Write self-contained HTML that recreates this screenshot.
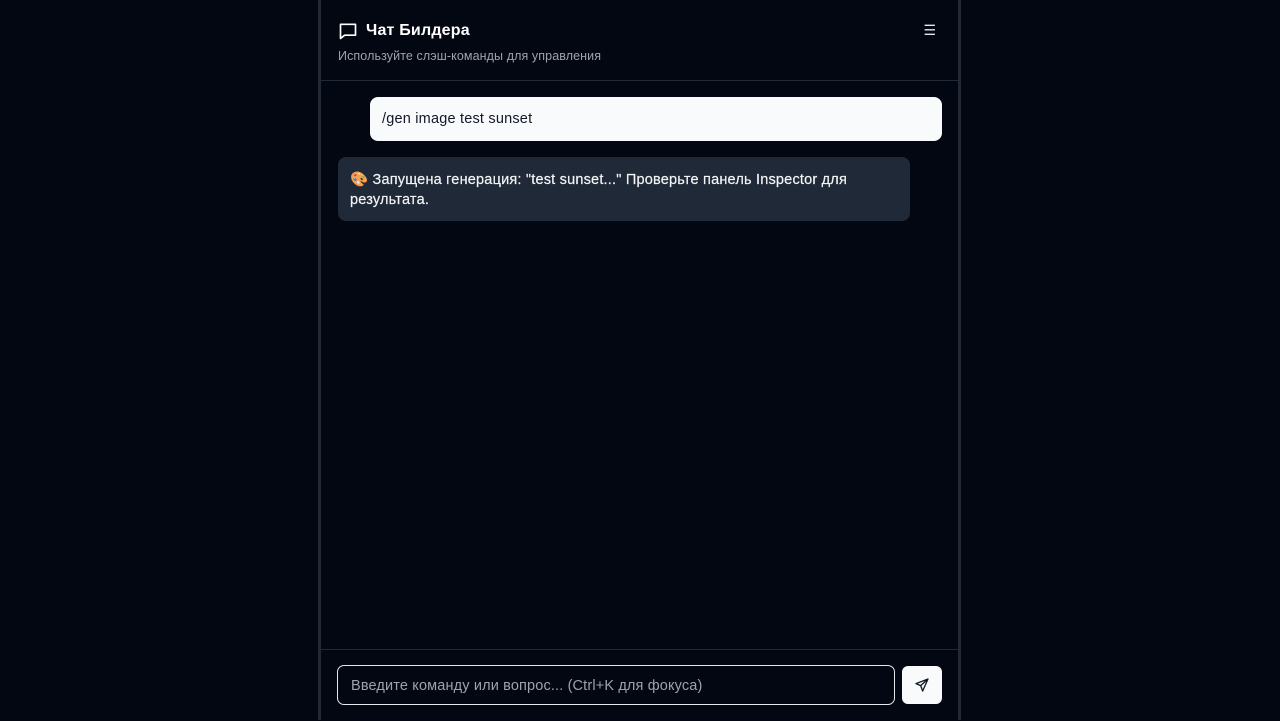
<!DOCTYPE html><html><head><style>
body{margin:0;background:#030712;font-family:"Liberation Sans",sans-serif;width:1280px;height:720px;overflow:hidden;position:relative}
.panel{position:absolute;left:318px;top:0;width:637px;height:720px;border-left:3px solid #1f2937;border-right:3px solid #1f2937;background:#030712}
.hdr{height:80px;border-bottom:1px solid #1f2937;position:relative}
.title{position:absolute;left:17px;top:21px;display:flex;align-items:center;color:#fff;font-weight:bold;font-size:16px;letter-spacing:0.2px}
.title svg{margin-right:8px}
.sub{position:absolute;left:17px;top:49px;color:#9ca3af;font-size:12.5px;letter-spacing:0.1px}
.menu{position:absolute;right:22px;top:22px;color:#e5e7eb;font-size:14px}
.u{position:absolute;left:49px;top:97px;height:44px;background:#f9fafb;border-radius:8px;color:#111827;font-size:14.5px;line-height:45px;padding-left:12px;box-sizing:border-box;width:572px;letter-spacing:0.2px}
.a{position:absolute;left:17px;top:157px;width:572px;height:64px;background:#1f2937;border-radius:8px;color:#f3f4f6;font-size:14.5px;line-height:20px;padding:13px 12px 11px;box-sizing:border-box;letter-spacing:0.2px;-webkit-text-stroke:0.2px #f3f4f6}
.foot{position:absolute;left:0;right:0;top:649px;border-top:1px solid #1f2937;height:71px}
.inp{position:absolute;left:16px;top:15px;width:558px;height:40px;border:1px solid #e5e7eb;border-radius:7px;box-sizing:border-box;color:#9ca3af;font-size:14.5px;line-height:40px;padding-left:13px;letter-spacing:0.15px}
.btn{position:absolute;left:581px;top:16px;width:40px;height:38px;background:#f9fafb;border-radius:6px;display:flex;align-items:center;justify-content:center}
</style></head><body><div class="panel">
<div class="hdr"><div class="title"><svg width="20" height="20" viewBox="0 0 24 24" fill="none" stroke="#fff" stroke-width="2" stroke-linejoin="round"><path d="M3 4h18v13H8l-5 4z"/></svg>Чат Билдера</div>
<div class="sub">Используйте слэш-команды для управления</div><div class="menu">☰</div></div>
<div class="u">/gen image test sunset</div>
<div class="a">🎨 Запущена генерация: "test sunset..." Проверьте панель Inspector для<br>результата.</div>
<div class="foot"><div class="inp">Введите команду или вопрос... (Ctrl+K для фокуса)</div>
<div class="btn"><svg width="16" height="16" viewBox="0 0 24 24" fill="none" stroke="#111827" stroke-width="2" stroke-linejoin="round"><path d="M21 3L3 10l7 3 3 8z M10 13l11-10"/></svg></div></div>
</div></body></html>
